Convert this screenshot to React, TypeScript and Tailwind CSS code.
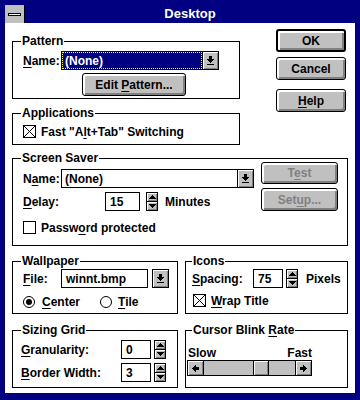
import React from 'react';

const bevel = 'shadow-[inset_1px_1px_0_#ffffff,inset_-1px_-1px_0_#808080]';
const btnBevel = 'shadow-[inset_1px_1px_0_#ffffff,inset_2px_2px_0_#ffffff,inset_-1px_-1px_0_#808080,inset_-2px_-2px_0_#808080]';

function U({ children }: { children: React.ReactNode }) {
  return <span className="underline decoration-1 underline-offset-[2px]">{children}</span>;
}

function Group({ label, legendClass = 'ml-[8px]', className = '', children }: { label: React.ReactNode; legendClass?: string; className?: string; children: React.ReactNode }) {
  return (
    <fieldset className={`border border-black p-0 m-0 min-w-0 ${className}`}>
      <legend className={`${legendClass} px-[1px] leading-[14px]`}>{label}</legend>
      {children}
    </fieldset>
  );
}

function Btn({ children, className = '', def = false, disabled = false }: { children: React.ReactNode; className?: string; def?: boolean; disabled?: boolean }) {
  return (
    <div
      className={`flex items-center justify-center rounded-[3px] bg-[#c0c0c0] border-black ${def ? 'border-2' : 'border'} ${btnBevel} ${disabled ? 'text-[#808080]' : 'text-black'} ${className}`}
    >
      {children}
    </div>
  );
}

function DownArrow() {
  return (
    <svg width="7" height="9" shapeRendering="crispEdges">
      <path d="M2 0h3v3h-3z M0 3h7v1h-7z M1 4h5v1h-5z M2 5h3v1h-3z M3 6h1v1h-1z M0 8h7v1h-7z" fill="#000" />
    </svg>
  );
}

function Combo({ w, value, selected = false }: { w: string; value: string; selected?: boolean }) {
  return (
    <div className={`flex h-[19px] border border-black bg-white ${w}`}>
      {selected ? (
        <div className="flex-1 flex items-center bg-[#000080] text-white border border-dotted border-[#ffff00] pl-[2px]">{value}</div>
      ) : (
        <div className="flex-1 flex items-center pl-[3px]">{value}</div>
      )}
      <div className={`w-[16px] flex items-center justify-center bg-[#c0c0c0] border-l border-black ${bevel}`}>
        <DownArrow />
      </div>
    </div>
  );
}

function Spin() {
  return (
    <div className="flex flex-col w-[12px] h-[19px] border border-black bg-[#c0c0c0]">
      <div className={`flex-1 flex items-center justify-center border-b border-black ${bevel}`}>
        <svg width="7" height="4" shapeRendering="crispEdges">
          <path d="M3 0h1v1h-1z M2 1h3v1h-3z M1 2h5v1h-5z M0 3h7v1h-7z" fill="#000" />
        </svg>
      </div>
      <div className={`flex-1 flex items-center justify-center ${bevel}`}>
        <svg width="7" height="4" shapeRendering="crispEdges">
          <path d="M0 0h7v1h-7z M1 1h5v1h-5z M2 2h3v1h-3z M3 3h1v1h-1z" fill="#000" />
        </svg>
      </div>
    </div>
  );
}

function Edit({ w, value }: { w: string; value: string }) {
  return <div className={`h-[19px] border border-black bg-white flex items-center pl-[4px] ${w}`}>{value}</div>;
}

function Check({ checked = false }: { checked?: boolean }) {
  return (
    <div className="w-[13px] h-[13px] border border-black bg-white shrink-0">
      {checked && (
        <svg width="11" height="11" shapeRendering="crispEdges">
          <path d="M0 0L11 11M11 0L0 11" stroke="#000" strokeWidth="1" />
        </svg>
      )}
    </div>
  );
}

function Radio({ on = false }: { on?: boolean }) {
  return (
    <div className="w-[12px] h-[12px] rounded-full border border-black bg-white flex items-center justify-center shrink-0">
      {on && <div className="w-[6px] h-[6px] rounded-full bg-black" />}
    </div>
  );
}

function ScrollBar() {
  return (
    <div className="flex h-[16px] w-[125px] border border-black bg-[#c0c0c0]">
      <div className={`w-[16px] flex items-center justify-center border-r border-black ${bevel}`}>
        <svg width="7" height="7" shapeRendering="crispEdges">
          <path d="M0 3h1v1h-1z M1 2h1v3h-1z M2 1h1v5h-1z M3 0h1v7h-1z M4 2h3v3h-3z" fill="#000" />
        </svg>
      </div>
      <div className="flex-1 flex">
        <div className="w-[49px]" />
        <div className={`w-[16px] border-x border-black ${bevel}`} />
      </div>
      <div className={`w-[16px] flex items-center justify-center border-l border-black ${bevel}`}>
        <svg width="7" height="7" shapeRendering="crispEdges">
          <path d="M0 2h3v3h-3z M3 0h1v7h-1z M4 1h1v5h-1z M5 2h1v3h-1z M6 3h1v1h-1z" fill="#000" />
        </svg>
      </div>
    </div>
  );
}

export default function App() {
  return (
    <div className="w-[360px] h-[400px] bg-[#000080] pt-[5px] px-[5px] pb-[7px] flex flex-col font-['Liberation_Sans',Arial,sans-serif] font-bold text-[12px] leading-[14px] text-black">
      {/* title bar */}
      <div className="flex h-[18px] bg-[#000080] shrink-0">
        <div className="w-[20px] bg-[#c0c0c0] border-r border-black flex items-center justify-center">
          <div className="w-[13px] h-[3px] bg-white border border-black" />
        </div>
        <div className="flex-1 flex items-center justify-center text-white text-[13px]">Desktop</div>
      </div>

      <div className="flex-1 bg-white pl-[7px] pr-[7px] pt-[6px]">
        {/* top row */}
        <div className="flex items-start">
          <div className="mt-[5px] w-[228px] flex flex-col">
            <Group label="Pattern">
              <div className="pl-[10px] pt-[3px] pb-[2px]">
                <div className="flex items-center h-[19px]">
                  <div className="w-[38px]"><U>N</U>ame:</div>
                  <Combo w="w-[158px]" value="(None)" selected />
                </div>
                <Btn className="mt-[3px] ml-[59px] w-[104px] h-[23px]">
                  <span>Edit <U>P</U>attern...</span>
                </Btn>
              </div>
            </Group>
            <Group label="Applications" className="mt-[7px]">
              <div className="pl-[10px] pt-[5px] pb-[6px] flex items-center h-[13px] box-content">
                <Check checked />
                <span className="ml-[5px]">Fast "A<U>l</U>t+Tab" Switching</span>
              </div>
            </Group>
          </div>
          <div className="ml-[36px] w-[70px] flex flex-col">
            <Btn def className="h-[23px]">OK</Btn>
            <Btn className="mt-[5px] h-[23px]">Cancel</Btn>
            <Btn className="mt-[9px] h-[23px]"><span><U>H</U>elp</span></Btn>
          </div>
        </div>

        {/* screen saver */}
        <Group label="Screen Saver" className="mt-[6px]">
          <div className="flex pl-[10px]">
            <div className="w-[231px] pt-[4px] pb-[11px]">
              <div className="flex items-center h-[19px]">
                <div className="w-[38px]">N<U>a</U>me:</div>
                <Combo w="w-[193px]" value="(None)" />
              </div>
              <div className="flex items-center h-[19px] mt-[4px]">
                <div className="w-[82px]"><U>D</U>elay:</div>
                <Edit w="w-[35px]" value="15" />
                <div className="ml-[6px]"><Spin /></div>
                <div className="ml-[7px]">Minutes</div>
              </div>
              <div className="flex items-center h-[13px] mt-[10px]">
                <Check />
                <span className="ml-[5px]">Passw<U>o</U>rd protected</span>
              </div>
            </div>
            <div className="ml-[7px] -mt-[3px] w-[77px] flex flex-col">
              <Btn disabled className="h-[22px]"><span>T<U>e</U>st</span></Btn>
              <Btn disabled className="mt-[4px] h-[23px]"><span>Set<U>u</U>p...</span></Btn>
            </div>
          </div>
        </Group>

        {/* bottom row */}
        <div className="flex mt-[8px] gap-[7px]">
          <div className="w-[166px] flex flex-col">
            <Group label="Wallpaper">
              <div className="pl-[10px] pt-[1px] pb-[5px]">
                <div className="flex items-center h-[19px]">
                  <div className="w-[38px]"><U>F</U>ile:</div>
                  <Edit w="w-[87px]" value="winnt.bmp" />
                  <div className={`ml-[4px] w-[17px] h-[19px] flex items-center justify-center bg-[#c0c0c0] border border-black ${bevel}`}>
                    <DownArrow />
                  </div>
                </div>
                <div className="flex items-center h-[13px] mt-[7px]">
                  <div className="w-[77px] flex items-center">
                    <Radio on />
                    <span className="ml-[7px]"><U>C</U>enter</span>
                  </div>
                  <Radio />
                  <span className="ml-[6px]"><U>T</U>ile</span>
                </div>
              </div>
            </Group>
            <Group label="Sizing Grid" className="mt-[9px]">
              <div className="pl-[8px] pt-[3px] pb-[5px]">
                <div className="flex items-center h-[19px]">
                  <div className="w-[100px]"><U>G</U>ranularity:</div>
                  <Edit w="w-[30px]" value="0" />
                  <div className="ml-[3px]"><Spin /></div>
                </div>
                <div className="flex items-center h-[19px] mt-[4px]">
                  <div className="w-[100px]"><U>B</U>order Width:</div>
                  <Edit w="w-[30px]" value="3" />
                  <div className="ml-[3px]"><Spin /></div>
                </div>
              </div>
            </Group>
          </div>

          <div className="w-[163px] flex flex-col">
            <Group label="Icons" legendClass="ml-[6px]">
              <div className="pl-[6px] pt-[1px] pb-[6px]">
                <div className="flex items-center h-[19px]">
                  <div className="w-[61px]"><U>S</U>pacing:</div>
                  <Edit w="w-[30px]" value="75" />
                  <div className="ml-[3px]"><Spin /></div>
                  <div className="ml-[8px]">Pixels</div>
                </div>
                <div className="flex items-center h-[13px] mt-[6px] pl-[1px]">
                  <Check checked />
                  <span className="ml-[5px]"><U>W</U>rap Title</span>
                </div>
              </div>
            </Group>
            <Group label={<span>Cursor Blink <U>R</U>ate</span>} legendClass="ml-[6px]" className="mt-[9px]">
              <div className="pl-[1px] pt-[9px] pb-[11px]">
                <div className="flex justify-between w-[125px] pl-[1px]">
                  <span>Slow</span>
                  <span>Fast</span>
                </div>
                <ScrollBar />
              </div>
            </Group>
          </div>
        </div>
      </div>
    </div>
  );
}
